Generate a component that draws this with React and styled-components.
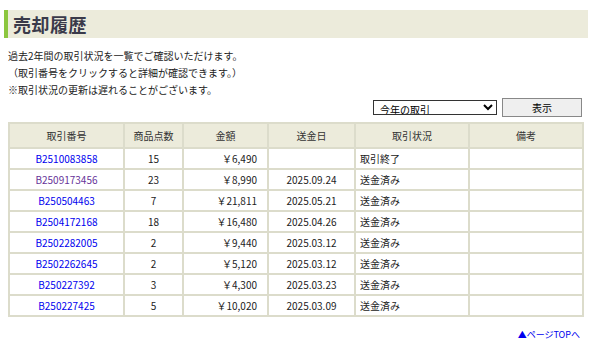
import styled, { createGlobalStyle } from "styled-components";

const GlobalStyle = createGlobalStyle`
  body {
    margin: 0;
    background: #ffffff;
    font-family: "Noto Sans CJK JP", "Liberation Sans", sans-serif;
    color: #333333;
  }
`;

const rows = [
  { no: "B2510083858", qty: "15", amount: "￥6,490", date: "", status: "取引終了" },
  { no: "B2509173456", qty: "23", amount: "￥8,990", date: "2025.09.24", status: "送金済み", visited: true },
  { no: "B250504463", qty: "7", amount: "￥21,811", date: "2025.05.21", status: "送金済み" },
  { no: "B2504172168", qty: "18", amount: "￥16,480", date: "2025.04.26", status: "送金済み" },
  { no: "B2502282005", qty: "2", amount: "￥9,440", date: "2025.03.12", status: "送金済み" },
  { no: "B2502262645", qty: "2", amount: "￥5,120", date: "2025.03.12", status: "送金済み" },
  { no: "B250227392", qty: "3", amount: "￥4,300", date: "2025.03.23", status: "送金済み" },
  { no: "B250227425", qty: "5", amount: "￥10,020", date: "2025.03.09", status: "送金済み" },
];

const App = () => {
  return (
    <Page>
      <GlobalStyle />
      <TitleBar>
        <h2>売却履歴</h2>
      </TitleBar>
      <Content>
        <Intro>
          <p>過去2年間の取引状況を一覧でご確認いただけます。</p>
          <p>（取引番号をクリックすると詳細が確認できます。）</p>
          <p>※取引状況の更新は遅れることがございます。</p>
        </Intro>
        <Controls>
          <Select defaultValue="this">
            <option value="this">今年の取引</option>
            <option value="last">昨年の取引</option>
          </Select>
          <ShowButton>表示</ShowButton>
        </Controls>
        <Table>
          <colgroup>
            <col style={{ width: 115 }} />
            <col style={{ width: 59 }} />
            <col style={{ width: 85 }} />
            <col style={{ width: 87 }} />
            <col style={{ width: 114 }} />
            <col style={{ width: 114 }} />
          </colgroup>
          <thead>
            <tr>
              <th>取引番号</th>
              <th>商品点数</th>
              <th>金額</th>
              <th>送金日</th>
              <th>取引状況</th>
              <th>備考</th>
            </tr>
          </thead>
          <tbody>
            {rows.map((r) => (
              <tr key={r.no}>
                <Cell $align="center">
                  <OrderLink href="#" $visited={r.visited}>{r.no}</OrderLink>
                </Cell>
                <Cell $align="center">{r.qty}</Cell>
                <Cell $align="right">{r.amount}</Cell>
                <Cell $align="center">{r.date}</Cell>
                <Cell $align="left">{r.status}</Cell>
                <Cell />
              </tr>
            ))}
          </tbody>
        </Table>
        <Footer>
          <TopLink href="#">▲ページTOPへ</TopLink>
        </Footer>
      </Content>
    </Page>
  );
};
export default App;

const Page = styled.div`
  width: 604px;
  padding-top: 10px;
`;

const TitleBar = styled.div`
  margin: 0 16px 0 4px;
  height: 28px;
  background: #ecebdb;
  border-left: 4px solid #8cc63f;
  display: flex;
  align-items: center;
  padding-left: 5px;
  h2 {
    margin: 0;
    font-size: 18px;
    font-weight: bold;
    color: #3a3a4a;
    letter-spacing: 0.5px;
  }
`;

const Content = styled.div`
  margin: 0 22px 0 8px;
`;

const Intro = styled.div`
  margin-top: 9px;
  p {
    margin: 0;
    font-size: 10px;
    line-height: 17px;
    color: #222;
  }
`;

const Controls = styled.div`
  display: flex;
  justify-content: flex-end;
  align-items: center;
  gap: 5px;
  margin-top: 0;
`;

const Select = styled.select`
  width: 124px;
  height: 15px;
  font-size: 10px;
  font-family: inherit;
  border: 1px solid #333;
  border-radius: 0;
  padding: 0 2px;
  background: #fff;
  color: #000;
`;

const ShowButton = styled.button`
  width: 80px;
  height: 19px;
  font-size: 10px;
  font-family: inherit;
  background: #efefef;
  border: 1px solid #888;
  color: #000;
  padding: 0;
`;

const Table = styled.table`
  margin-top: 5px;
  width: 574px;
  border-collapse: collapse;
  table-layout: fixed;
  font-size: 10px;
  th {
    background: #ecebdb;
    border: 2px solid #dcdccb;
    height: 23px;
    font-weight: normal;
    color: #333;
    padding: 0;
  }
`;

const Cell = styled.td`
  border: 2px solid #dcdccb;
  height: 19px;
  padding: 0 ${(p) => (p.$align === "right" ? "10px" : "4px")} 0 4px;
  text-align: ${(p) => p.$align || "left"};
  color: #222;
`;

const OrderLink = styled.a`
  color: ${(p) => (p.$visited ? "#663399" : "#0000ee")};
  text-decoration: none;
`;

const Footer = styled.div`
  display: flex;
  justify-content: flex-end;
  margin-top: 11px;
  padding-right: 2px;
`;

const TopLink = styled.a`
  font-size: 9px;
  color: #0000ee;
  text-decoration: none;
`;
